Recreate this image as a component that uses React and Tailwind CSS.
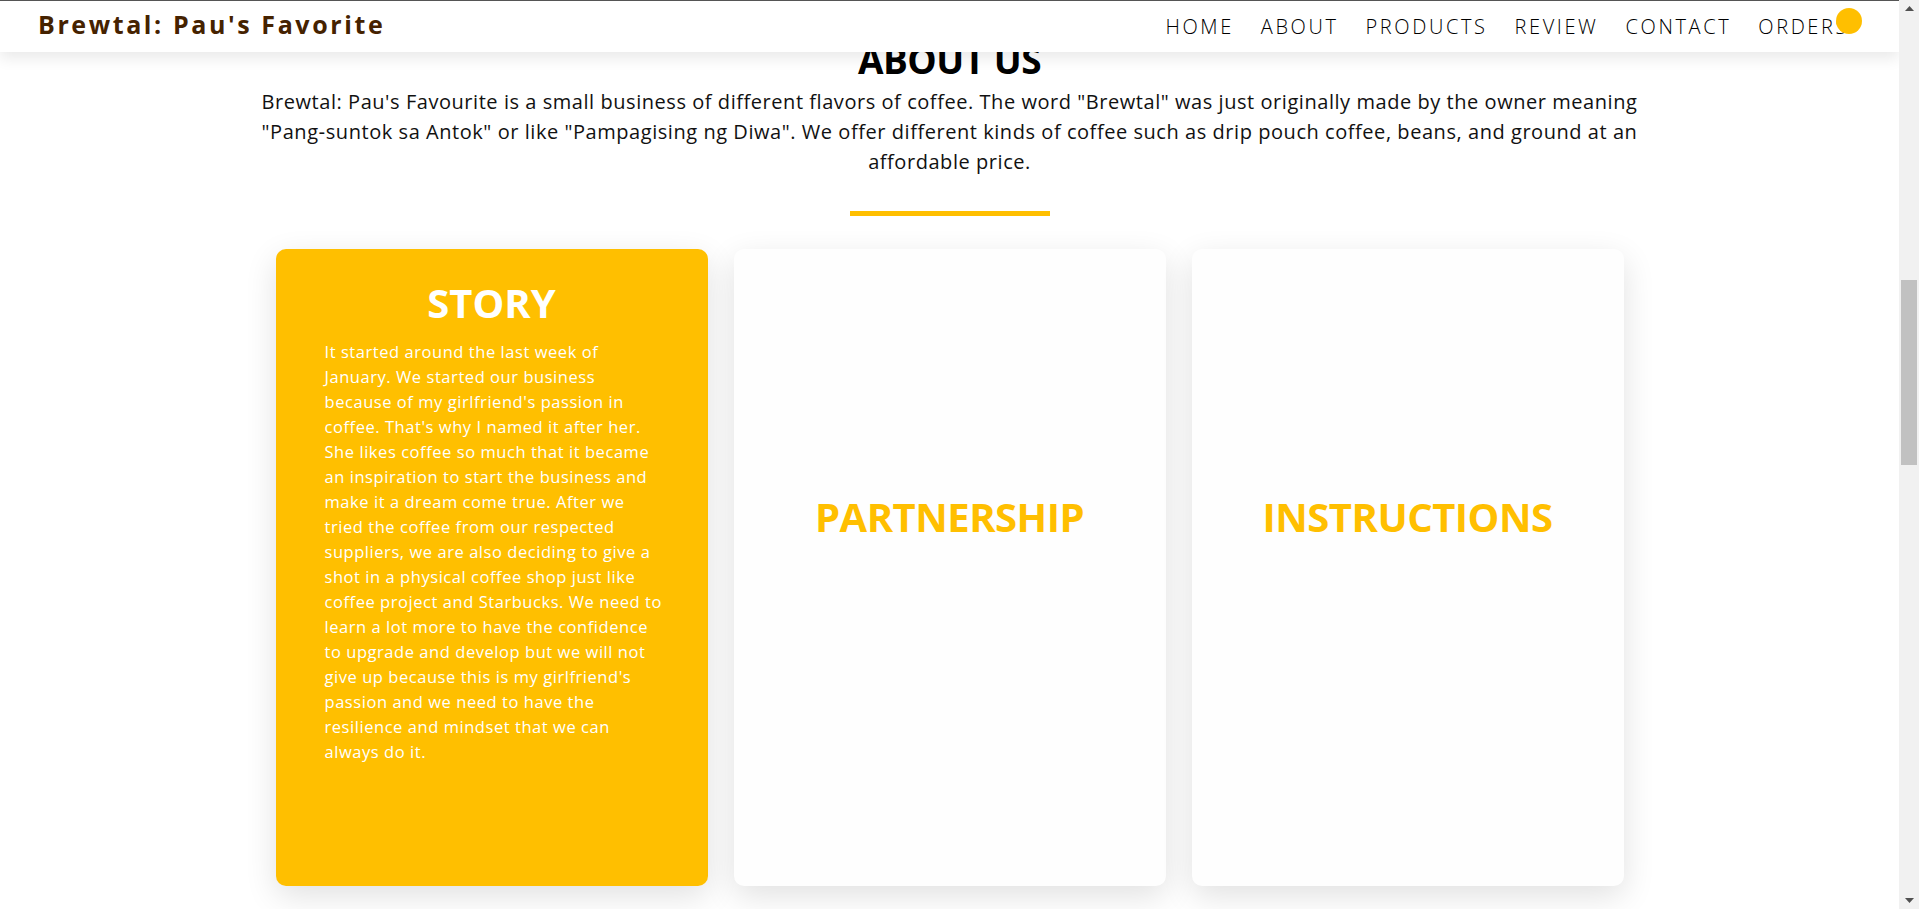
import React from 'react';

const navLinks = ['HOME', 'ABOUT', 'PRODUCTS', 'REVIEW', 'CONTACT', 'ORDERS'];

const storyLines = [
  'It started around the last week of',
  'January. We started our business',
  "because of my girlfriend's passion in",
  "coffee. That's why I named it after her.",
  'She likes coffee so much that it became',
  'an inspiration to start the business and',
  'make it a dream come true. After we',
  'tried the coffee from our respected',
  'suppliers, we are also deciding to give a',
  'shot in a physical coffee shop just like',
  'coffee project and Starbucks. We need to',
  'learn a lot more to have the confidence',
  'to upgrade and develop but we will not',
  "give up because this is my girlfriend's",
  'passion and we need to have the',
  'resilience and mindset that we can',
  'always do it.',
];

const Header = () => {
  return (
    <header className="absolute top-0 left-0 right-0 z-10 h-[52px] bg-white border-t border-[#555] shadow-[0_6px_14px_rgba(0,0,0,0.09)] flex items-center justify-between pl-[38px] pr-[50px]">
      <h1 className="text-[25px] font-bold tracking-[2.6px] text-[#452200] leading-none -mt-[4px]">
        Brewtal: Pau's Favorite
      </h1>
      <nav className="flex items-center gap-[27px]">
        {navLinks.map((link) => (
          <a
            key={link}
            href="#"
            className="relative text-[20px] font-light tracking-[2.6px] text-black leading-none"
          >
            {link}
            {link === 'ORDERS' && (
              <span className="absolute -top-[9px] -right-[13px] w-[26px] h-[26px] rounded-full bg-[#FFBF00]" />
            )}
          </a>
        ))}
      </nav>
    </header>
  );
};

const Card = ({ title, children, active }) => {
  return (
    <div
      className={
        active
          ? 'w-[432px] h-[637px] rounded-[10px] bg-[#FFBF00] shadow-[0_10px_32px_rgba(0,0,0,0.12)] flex flex-col items-center pt-[30px]'
          : 'w-[432px] h-[637px] rounded-[10px] bg-[#fefefe] shadow-[0_10px_32px_rgba(0,0,0,0.12)] flex flex-col items-center pt-[244px]'
      }
    >
      <h3
        className={
          active
            ? 'text-[40px] font-bold leading-[48px] text-white'
            : 'text-[40px] font-bold leading-[48px] text-[#FFBF00] tracking-[-0.5px]'
        }
      >
        {title}
      </h3>
      {children}
    </div>
  );
};

const Scrollbar = () => {
  return (
    <div className="w-[20px] h-full bg-[#f1f1f1] flex flex-col items-center">
      <div className="h-[17px] w-full flex items-center justify-center">
        <svg width="9" height="5" viewBox="0 0 9 5">
          <polygon points="0,5 4.5,0 9,5" fill="#505050" />
        </svg>
      </div>
      <div className="flex-1 w-full px-[2px] pt-[263px]">
        <div className="h-[185px] w-full bg-[#c1c1c1]" />
      </div>
      <div className="h-[17px] w-full flex items-center justify-center">
        <svg width="9" height="5" viewBox="0 0 9 5">
          <polygon points="0,0 9,0 4.5,5" fill="#505050" />
        </svg>
      </div>
    </div>
  );
};

const App = () => {
  return (
    <div className="h-screen w-full flex overflow-hidden bg-white font-['Open_Sans',sans-serif]">
      <div className="relative flex-1 h-full overflow-hidden">
        <Header />
        <main className="flex flex-col items-center pt-[40px]">
          <h2 className="text-[37px] font-bold leading-[40px] text-black tracking-[-0.5px]">
            ABOUT US
          </h2>
          <p className="mt-[7px] w-[1410px] text-center text-[20px] leading-[30px] tracking-[0.55px] text-[#111]">
            Brewtal: Pau's Favourite is a small business of different flavors of coffee. The word "Brewtal" was just
            originally made by the owner meaning "Pang&#8209;suntok sa Antok" or like "Pampagising ng Diwa". We offer
            different kinds of coffee such as drip pouch coffee, beans, and ground at an affordable price.
          </p>
          <div className="mt-[34px] w-[200px] h-[5px] bg-[#FFBF00]" />
          <div className="mt-[33px] flex gap-[26px]">
            <Card title="STORY" active>
              <p className="mt-[12px] w-[334px] text-[16.5px] font-medium leading-[25px] tracking-[0.55px] text-white">
                {storyLines.map((line) => (
                  <span key={line} className="block whitespace-nowrap">
                    {line}
                  </span>
                ))}
              </p>
            </Card>
            <Card title="PARTNERSHIP" />
            <Card title="INSTRUCTIONS" />
          </div>
        </main>
      </div>
      <Scrollbar />
    </div>
  );
};

export default App;
